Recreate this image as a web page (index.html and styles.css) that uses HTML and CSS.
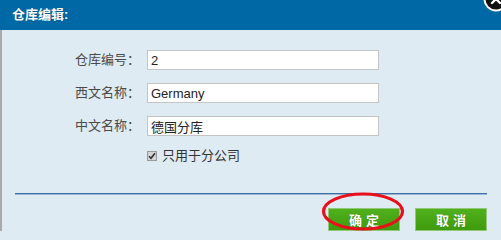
FILE: index.html
```html
<!DOCTYPE html>
<html>
<head>
<meta charset="utf-8">
<link rel="stylesheet" href="styles.css">
</head>
<body>
<div class="dialog">
  <div class="header">仓库编辑:</div>
  <div class="close">
    <svg width="26" height="26" viewBox="0 0 26 26">
      <circle cx="13" cy="13" r="11.5" fill="#111" stroke="#fff" stroke-width="2"/>
      <path d="M9 9 L17 17 M17 9 L9 17" stroke="#fff" stroke-width="2.4" stroke-linecap="round"/>
    </svg>
  </div>
  <div class="body">
    <div class="form">
      <label class="label">仓库编号：</label>
      <input class="field" type="text" value="2">
      <label class="label">西文名称：</label>
      <input class="field" type="text" value="Germany">
      <label class="label">中文名称：</label>
      <input class="field" type="text" value="德国分库">
      <div class="check-row">
        <span class="check">
          <svg width="8" height="8" viewBox="0 0 8 8"><path d="M1 4.2 L3 6.3 L7 1.2" fill="none" stroke="#333" stroke-width="1.6"/></svg>
        </span>
        <span class="check-text">只用于分公司</span>
      </div>
    </div>
    <div class="divider"></div>
    <div class="actions">
      <button class="btn">确定</button>
      <button class="btn">取消</button>
    </div>
  </div>
  <svg class="mark" width="86" height="42" viewBox="0 0 86 42">
    <ellipse cx="42" cy="20.5" rx="39.5" ry="17.5" fill="none" stroke="#e8101a" stroke-width="3.2"/>
  </svg>
</div>
</body>
</html>
```
FILE: styles.css
```css
html, body {
  margin: 0;
  padding: 0;
}
body {
  font-family: "Liberation Sans", "Noto Sans CJK SC", sans-serif;
  background: #dfebf3;
}
.dialog {
  position: relative;
  width: 501px;
  height: 231px;
  overflow: hidden;
  background: #dfebf3;
}
.header {
  height: 30px;
  line-height: 29px;
  background: #0069a5;
  color: #fff;
  font-weight: bold;
  font-size: 13px;
  padding-left: 12px;
  text-shadow: 0 0 1px rgba(0,0,0,0.4);
}
.close {
  position: absolute;
  left: 483px;
  top: -14px;
  width: 26px;
  height: 26px;
}
.body {
  border-left: 2px solid #a9a9a9;
  height: 201px;
}
.form {
  display: grid;
  grid-template-columns: 138px 232px;
  grid-auto-rows: 20px;
  column-gap: 7px;
  row-gap: 13px;
  padding-top: 20px;
}
.label {
  text-align: right;
  font-size: 13px;
  line-height: 20px;
  color: #4a4a4a;
}
.field {
  box-sizing: border-box;
  width: 232px;
  height: 20px;
  margin: 0;
  border: 1px solid #c4c4c4;
  background: #fff;
  padding: 0 3px;
  font-family: "Liberation Sans", "Noto Sans CJK SC", sans-serif;
  font-size: 13px;
  color: #222;
  outline: none;
}
.check-row {
  grid-column: 2;
  display: flex;
  align-items: center;
  gap: 5px;
  height: 14px;
  align-self: start;
}
.check {
  box-sizing: border-box;
  width: 10px;
  height: 10px;
  border: 1px solid #9a9a9a;
  background: #d4d4d4;
  display: flex;
  align-items: center;
  justify-content: center;
}
.check svg {
  display: block;
}
.check-text {
  font-size: 13px;
  color: #333;
  line-height: 14px;
}
.divider {
  margin: 24px 0 0 13px;
  width: 472px;
  height: 1px;
  background: #3c6ea8;
  border-bottom: 1px solid #9db6d3;
}
.actions {
  display: flex;
  justify-content: flex-end;
  gap: 15px;
  margin-top: 13px;
  padding-right: 14px;
}
.btn {
  box-sizing: border-box;
  width: 72px;
  height: 23px;
  margin: 0;
  padding: 0 0 0 4px;
  border: 1px solid #93c878;
  background: linear-gradient(#50b01c, #3f9b0e);
  color: #fff;
  font-family: "Liberation Sans", "Noto Sans CJK SC", sans-serif;
  font-weight: bold;
  font-size: 13px;
  letter-spacing: 4px;
  text-shadow: 0 0 1px rgba(0,0,0,0.3);
}
.mark {
  position: absolute;
  left: 321px;
  top: 191px;
}
```
